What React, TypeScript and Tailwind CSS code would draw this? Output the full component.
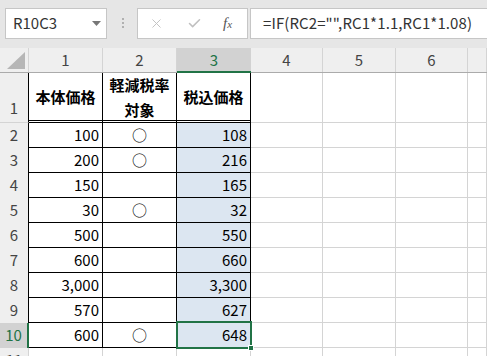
import { X, Check } from 'lucide-react';

const COLS = ['1', '2', '3', '4', '5', '6', ''];
const WIDTHS = ['w-[74px]', 'w-[74px]', 'w-[74px]', 'w-[72px]', 'w-[73px]', 'w-[72px]', 'flex-1'];

const ROWS: { no: string; a: string; b: boolean; c: string }[] = [
  { no: '2', a: '100', b: true, c: '108' },
  { no: '3', a: '200', b: true, c: '216' },
  { no: '4', a: '150', b: false, c: '165' },
  { no: '5', a: '30', b: true, c: '32' },
  { no: '6', a: '500', b: false, c: '550' },
  { no: '7', a: '600', b: false, c: '660' },
  { no: '8', a: '3,000', b: false, c: '3,300' },
  { no: '9', a: '570', b: false, c: '627' },
  { no: '10', a: '600', b: true, c: '648' },
];

const font = "font-['Noto_Sans_CJK_JP','Noto_Sans',sans-serif]";

function Toolbar() {
  return (
    <div className="flex h-[48px] items-start bg-[#e6e6e6] pt-[8px]">
      <div className="ml-[5px] flex h-[31px] w-[102px] items-center border border-[#c6c6c6] bg-white pl-[7px] pr-[4px]">
        <span className="flex-1 text-[15px] text-[#333]">R10C3</span>
        <svg width="9" height="5" viewBox="0 0 9 5" className="mr-[1px]">
          <path d="M0 0h9L4.5 5z" fill="#777" />
        </svg>
      </div>
      <div className="ml-[14px] mt-[10px] flex w-[3px] flex-col items-center gap-[2px]">
        <span className="h-[2px] w-[2px] bg-[#b0b0b0]" />
        <span className="h-[2px] w-[2px] bg-[#b0b0b0]" />
        <span className="h-[2px] w-[2px] bg-[#b0b0b0]" />
      </div>
      <div className="ml-[13px] flex h-[31px] w-[111px] items-center border border-[#c6c6c6] bg-white">
        <X className="ml-[11px] h-[15px] w-[15px] text-[#c0c0c0]" strokeWidth={1.5} />
        <Check className="ml-[23px] h-[15px] w-[15px] text-[#c0c0c0]" strokeWidth={2.5} />
        <span className="ml-[21px] font-['Liberation_Serif',serif] text-[15px] italic text-[#555]">
          f<span className="text-[11px]">x</span>
        </span>
      </div>
      <div className="ml-[2px] flex h-[31px] flex-1 items-center border border-r-0 border-[#c6c6c6] bg-white pl-[12px]">
        <span className="text-[15px] tracking-[0.1px] text-[#333]">=IF(RC2="",RC1*1.1,RC1*1.08)</span>
      </div>
    </div>
  );
}

function HeaderRow() {
  return (
    <div className="flex h-[25px] border-b border-[#ababab] bg-[#efefef]">
      <div className="relative w-[29px] shrink-0 border-r border-[#d4d4d4]">
        <svg width="18" height="17" viewBox="0 0 18 17" className="absolute bottom-[3px] right-[3px]">
          <path d="M18 0V17H0z" fill="#b6b6b6" />
        </svg>
      </div>
      {COLS.map((c, i) => {
        const sel = c === '3';
        return (
          <div
            key={i}
            className={`${WIDTHS[i]} flex shrink-0 items-center justify-center text-[15px] ${
              sel
                ? 'relative bg-[#d2d2d2] text-[#217346]'
                : 'border-r border-[#d4d4d4] text-[#444]'
            }`}
          >
            {c}
            {sel && <span className="absolute bottom-[-1px] left-0 h-[2px] w-full bg-[#217346]" />}
          </div>
        );
      })}
    </div>
  );
}

function RowHead({ no, sel }: { no: string; sel?: boolean }) {
  return (
    <div
      className={`flex w-[29px] shrink-0 items-center justify-center text-[15px] ${
        sel ? 'border-r-2 border-[#217346] bg-[#d2d2d2] text-[#217346]' : 'border-r border-black bg-[#efefef] text-[#444]'
      }`}
    >
      {no}
    </div>
  );
}

function Grid() {
  return (
    <div className={`flex flex-col ${font}`}>
      {/* row 1 */}
      <div className="flex h-[50px]">
        <div className="flex w-[29px] shrink-0 flex-col">
          <div className="flex flex-1 items-end justify-center border-r border-black bg-[#efefef] pb-[1px] text-[15px] text-[#444]">
            1
          </div>
          <div className="h-[3px] border-b border-[#d4d4d4] border-r border-r-black bg-[#efefef]" />
        </div>
        {['本体価格', '軽減税率\n対象', '税込価格'].map((t, i) => (
          <div
            key={i}
            className="flex w-[74px] shrink-0 items-center justify-center whitespace-pre-line border-b-[3px] border-r border-black border-b-black [border-bottom-style:double] text-center text-[15px] font-bold leading-[25px] text-black"
          >
            {t}
          </div>
        ))}
        {WIDTHS.slice(3).map((w, i) => (
          <div key={i} className={`${w} shrink-0 border-b border-r border-[#d4d4d4]`} />
        ))}
      </div>
      {ROWS.map((r) => {
        const sel = r.no === '10';
        return (
          <div key={r.no} className="flex h-[25px]">
            <RowHead no={r.no} sel={sel} />
            <div className="flex w-[74px] shrink-0 items-center justify-end border-b border-r border-black pr-[3px] text-[15px] text-black">
              {r.a}
            </div>
            <div className="flex w-[74px] shrink-0 items-center justify-center border-b border-r border-black text-[15px] text-black">
              {r.b ? '○' : ''}
            </div>
            <div className="relative flex w-[74px] shrink-0 items-center justify-end border-b border-r border-black bg-[#dce6f1] pr-[3px] text-[15px] text-black">
              {r.c}
              {sel && (
                <>
                  <span className="pointer-events-none absolute -left-[1px] -top-[2px] h-[28px] w-[76px] border-2 border-[#217346]" />
                  <span className="absolute -bottom-[4px] -right-[4px] h-[6px] w-[6px] border border-white bg-[#217346]" />
                </>
              )}
            </div>
            {WIDTHS.slice(3).map((w, i) => (
              <div key={i} className={`${w} shrink-0 border-b border-r border-[#d4d4d4]`} />
            ))}
          </div>
        );
      })}
      <div className="flex h-[25px]">
        <div className="flex w-[29px] shrink-0 items-center justify-center border-r border-[#d4d4d4] bg-[#efefef] text-[15px] text-[#444]">
          11
        </div>
        {WIDTHS.map((w, i) => (
          <div key={i} className={`${w} shrink-0 border-b border-r border-[#d4d4d4]`} />
        ))}
      </div>
    </div>
  );
}

export default function App() {
  return (
    <div className={`h-[356px] w-[487px] overflow-hidden bg-white ${font}`}>
      <Toolbar />
      <HeaderRow />
      <Grid />
    </div>
  );
}
